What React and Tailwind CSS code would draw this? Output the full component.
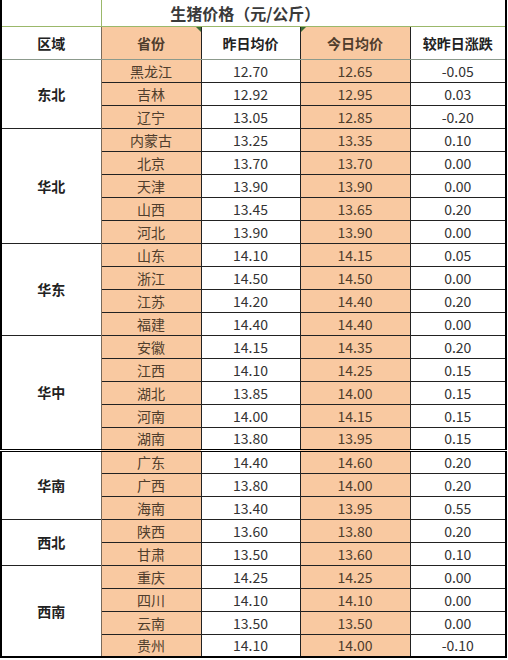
const groups = [
  {
    name: "东北",
    rows: [
      ["黑龙江", "12.70", "12.65", "-0.05"],
      ["吉林", "12.92", "12.95", "0.03"],
      ["辽宁", "13.05", "12.85", "-0.20"],
    ],
  },
  {
    name: "华北",
    rows: [
      ["内蒙古", "13.25", "13.35", "0.10"],
      ["北京", "13.70", "13.70", "0.00"],
      ["天津", "13.90", "13.90", "0.00"],
      ["山西", "13.45", "13.65", "0.20"],
      ["河北", "13.90", "13.90", "0.00"],
    ],
  },
  {
    name: "华东",
    rows: [
      ["山东", "14.10", "14.15", "0.05"],
      ["浙江", "14.50", "14.50", "0.00"],
      ["江苏", "14.20", "14.40", "0.20"],
      ["福建", "14.40", "14.40", "0.00"],
    ],
  },
  {
    name: "华中",
    rows: [
      ["安徽", "14.15", "14.35", "0.20"],
      ["江西", "14.10", "14.25", "0.15"],
      ["湖北", "13.85", "14.00", "0.15"],
      ["河南", "14.00", "14.15", "0.15"],
      ["湖南", "13.80", "13.95", "0.15"],
    ],
  },
  {
    name: "华南",
    double: true,
    rows: [
      ["广东", "14.40", "14.60", "0.20"],
      ["广西", "13.80", "14.00", "0.20"],
      ["海南", "13.40", "13.95", "0.55"],
    ],
  },
  {
    name: "西北",
    rows: [
      ["陕西", "13.60", "13.80", "0.20"],
      ["甘肃", "13.50", "13.60", "0.10"],
    ],
  },
  {
    name: "西南",
    rows: [
      ["重庆", "14.25", "14.25", "0.00"],
      ["四川", "14.10", "14.10", "0.00"],
      ["云南", "13.50", "13.50", "0.00"],
      ["贵州", "14.10", "14.00", "-0.10"],
    ],
  },
];

const peach = "bg-[#f9c9a1] text-[#4f3d2c]";
const plain = "bg-white text-[#333]";

export default function App() {
  return (
    <div
      className="w-[508px] h-[660px] bg-white"
      style={{ fontFamily: '"Noto Sans CJK SC", "Noto Sans", sans-serif' }}
    >
      <table className="table-fixed border-collapse w-[507px] border-l-2 border-r-2 border-b-2 border-l-black border-r-black border-b-black text-[14px] leading-none">
        <colgroup>
          <col className="w-[100px]" />
          <col className="w-[100px]" />
          <col className="w-[99px]" />
          <col className="w-[110px]" />
          <col />
        </colgroup>
        <thead>
          <tr className="h-[26px]">
            <th className="border-b border-r border-[#9bb86a]"></th>
            <th
              colSpan={4}
              className="border-b border-[#9bb86a] pr-[116px] text-[16px] font-bold text-[#3a3a3a] text-center"
            >
              生猪价格（元/公斤）
            </th>
          </tr>
          <tr className="h-[33px] font-bold text-[#222]">
            <th className="border-b border-r border-b-[#8c9a8c] border-r-[#7a6a5a] bg-white">区域</th>
            <th className={`relative border-b border-r border-b-[#8c9a8c] border-r-[#222] ${peach} text-[#3b2e22]`}>
              省份
              <span className="absolute top-0 right-0 w-0 h-0 border-t-[5px] border-l-[5px] border-t-[#3d6b35] border-l-transparent" />
            </th>
            <th className="border-b border-r border-b-[#8c9a8c] border-r-[#222] bg-white">昨日均价</th>
            <th className={`relative border-b border-r border-b-[#8c9a8c] border-r-[#222] ${peach} text-[#3b2e22]`}>
              今日均价
              <span className="absolute top-0 left-0 w-0 h-0 border-t-[5px] border-r-[5px] border-t-[#3d6b35] border-r-transparent" />
            </th>
            <th className="border-b border-b-[#8c9a8c] bg-white">较昨日涨跌</th>
          </tr>
        </thead>
        <tbody>
          {groups.map((g) =>
            g.rows.map((r, i) => {
              const top =
                i === 0 && g.double
                  ? "border-t-[3px] border-t-black border-double"
                  : "border-t border-t-[#222]";
              return (
                <tr key={g.name + r[0]} className="h-[23px] text-center">
                  {i === 0 && (
                    <td
                      rowSpan={g.rows.length}
                      className={`${top} border-r border-r-[#7a6a5a] font-bold text-[#222] bg-white`}
                    >
                      {g.name}
                    </td>
                  )}
                  <td className={`${top} border-r border-r-[#222] ${peach}`}>{r[0]}</td>
                  <td className={`${top} border-r border-r-[#222] ${plain}`}>{r[1]}</td>
                  <td className={`${top} border-r border-r-[#222] ${peach}`}>{r[2]}</td>
                  <td className={`${top} ${plain}`}>{r[3]}</td>
                </tr>
              );
            })
          )}
        </tbody>
      </table>
    </div>
  );
}
